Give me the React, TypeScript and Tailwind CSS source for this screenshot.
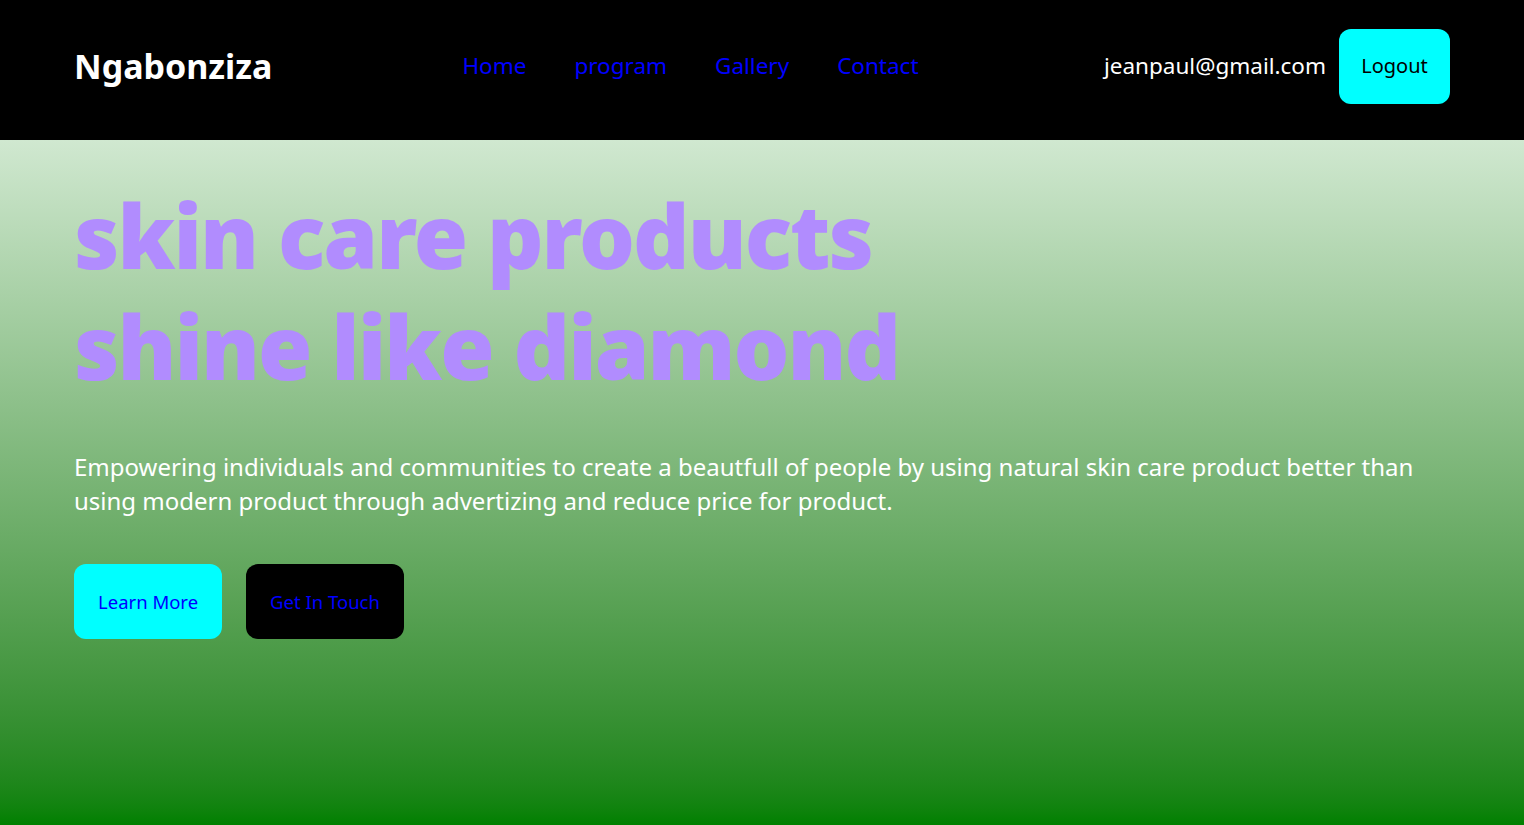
export default function App() {
  const links = ["Home", "program", "Gallery", "Contact"]
  return (
    <div className="min-h-screen flex flex-col font-['Noto_Sans',sans-serif]">
      <header className="h-[140px] bg-black flex items-center px-[74px] pb-[8px]">
        <h1 className="text-[34px] font-bold text-white">Ngabonziza</h1>
        <nav className="flex gap-[48px] ml-[190px]">
          {links.map((l) => (
            <a key={l} href="#" className="text-[22.5px] text-[#0000ff]">
              {l}
            </a>
          ))}
        </nav>
        <div className="ml-auto flex items-center gap-[13px]">
          <span className="text-[22.5px] text-white">jeanpaul@gmail.com</span>
          <button className="w-[111px] h-[75px] rounded-[12px] bg-[#00ffff] text-[20px] text-black">
            Logout
          </button>
        </div>
      </header>
      <main className="flex-1 bg-linear-to-b from-[#d0e8d0] to-[#008000] px-[74px] pt-[40px]">
        <h2 className="text-[88px] leading-[111px] font-black text-[#b18cfe] tracking-[-2px]">
          skin care products
          <br />
          shine like diamond
        </h2>
        <p className="mt-[48px] text-[24px] leading-[34px] text-white max-w-[1365px]">
          Empowering individuals and communities to create a beautfull of people by using natural skin care
          product better than using modern product through advertizing and reduce price for product.
        </p>
        <div className="mt-[46px] flex gap-[24px]">
          <button className="h-[75px] px-[24px] rounded-[12px] bg-[#00ffff] text-[18.5px] text-[#0000ff]">
            Learn More
          </button>
          <button className="h-[75px] px-[24px] rounded-[12px] bg-black text-[18.5px] text-[#0000ff]">
            Get In Touch
          </button>
        </div>
      </main>
    </div>
  )
}
